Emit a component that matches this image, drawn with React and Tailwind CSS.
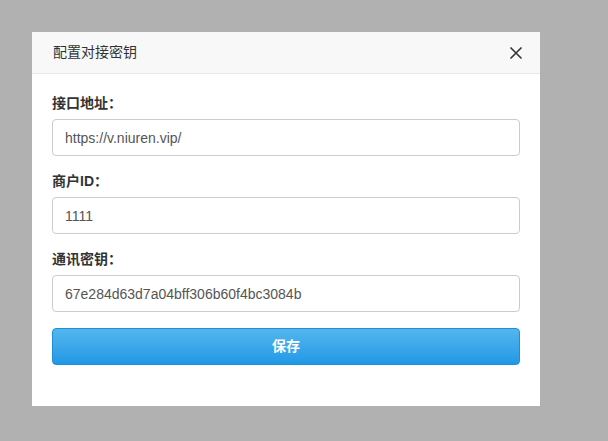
import React from 'react';

const fields = [
  { label: '接口地址：', value: 'https://v.niuren.vip/' },
  { label: '商户ID：', value: '1111' },
  { label: '通讯密钥：', value: '67e284d63d7a04bff306b60f4bc3084b' },
];

const App = () => {
  return (
    <div
      className="w-[608px] h-[441px] bg-[#b1b1b1] pt-[32px] pl-[32px] overflow-hidden"
      style={{ fontFamily: '"Liberation Sans", Arial, "Noto Sans CJK SC", sans-serif' }}
    >
      <div className="w-[508px] h-[374px] bg-white flex flex-col">
        <div className="h-[42px] flex items-center justify-between pl-[21px] pr-[17px] bg-[#f8f8f8] border-b border-[#e8e8e8]">
          <span className="text-[14px] text-[#333]">配置对接密钥</span>
          <svg width="14" height="14" viewBox="0 0 14 14" className="text-[#333]">
            <path d="M1.5 1.5 L12.5 12.5 M12.5 1.5 L1.5 12.5" stroke="currentColor" strokeWidth="1.6" fill="none" />
          </svg>
        </div>

        <div className="pl-[20px] pr-[20px] pt-[19px] flex flex-col">
          {fields.map((f, i) => (
            <div key={i} className={i > 0 ? 'mt-[15px]' : ''}>
              <div className="h-[20px] leading-[20px] text-[14px] font-bold text-[#333] mb-[6px]">{f.label}</div>
              <input
                readOnly
                value={f.value}
                className="w-full h-[37px] px-[12px] border border-[#ccc] rounded-[4px] text-[14px] text-[#555] outline-none"
              />
            </div>
          ))}

          <button className="mt-[16px] h-[37px] w-full rounded-[4px] border border-[#1e8fd6] bg-gradient-to-b from-[#52b6ef] to-[#2098e5] text-white text-[14px] font-bold">
            保存
          </button>
        </div>
      </div>
    </div>
  );
};

export default App;
